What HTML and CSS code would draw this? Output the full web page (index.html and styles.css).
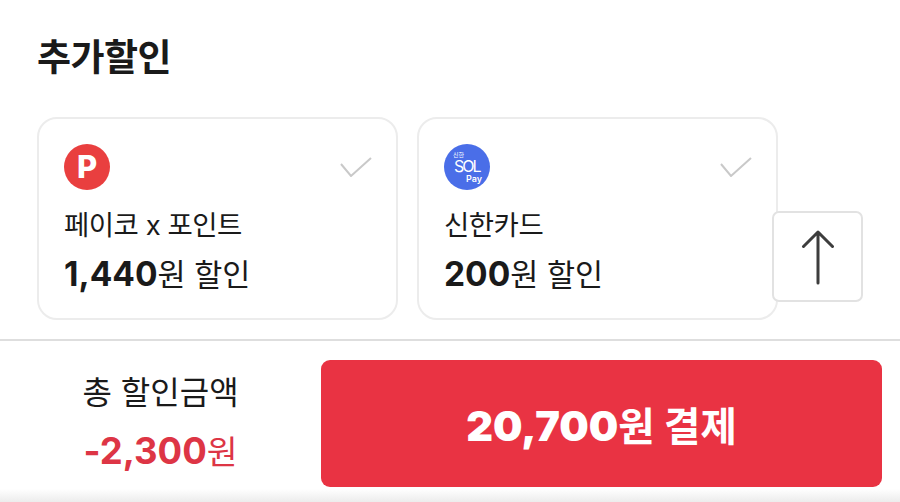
FILE: index.html
```html
<!DOCTYPE html>
<html lang="ko">
<head>
  <meta charset="UTF-8">
  <title>추가할인</title>
  <link rel="stylesheet" href="styles.css">
</head>
<body>
  <section class="discount">
    <h2 class="discount-title">추가할인</h2>
    <div class="card-list">
      <div class="card">
        <div class="card-top">
          <span class="logo logo-point">P</span>
          <svg class="check" width="32" height="20" viewBox="0 0 32 20"><path d="M1 7L11 19L31 1" /></svg>
        </div>
        <p class="card-name">페이코 x 포인트</p>
        <p class="card-amount"><strong>1,440</strong>원 할인</p>
      </div>
      <div class="card">
        <div class="card-top">
          <span class="logo logo-sol">
            <span class="sol-bank">신한</span>
            <span class="sol-name">SOL</span>
            <span class="sol-pay">Pay</span>
          </span>
          <svg class="check" width="32" height="20" viewBox="0 0 32 20"><path d="M1 7L11 19L31 1" /></svg>
        </div>
        <p class="card-name">신한카드</p>
        <p class="card-amount"><strong>200</strong>원 할인</p>
      </div>
    </div>
    <button class="top-btn">
      <svg width="34" height="56" viewBox="0 0 34 56"><path d="M17 54V3M2.500 17.500L17 3L31.500 17.500" /></svg>
    </button>
  </section>
  <footer class="pay-bar">
    <div class="pay-summary">
      <p class="pay-label">총 할인금액</p>
      <p class="pay-total"><strong>-2,300</strong>원</p>
    </div>
    <button class="pay-btn"><strong>20,700</strong>원 결제</button>
  </footer>
</body>
</html>
```

FILE: styles.css
```css
* {
  box-sizing: border-box;
}

body {
  margin: 0;
  height: 502px;
  overflow: hidden;
  background: #fff;
  color: #1a1a1a;
  font-family: "Inter", "Noto Sans CJK KR", sans-serif;
}

p {
  margin: 0;
}

.discount {
  position: relative;
  height: 339px;
  padding: 36px 37px 0;
}

.discount-title {
  margin: 0 0 38px;
  font-size: 37px;
  line-height: 43px;
  font-weight: 700;
  letter-spacing: -0.5px;
}

.card-list {
  display: flex;
  gap: 19px;
}

.card {
  width: 361px;
  height: 203px;
  padding: 25px 24px 0 25px;
  background: #fff;
  border: 2px solid #ececec;
  border-radius: 20px;
}

.card-top {
  display: flex;
  justify-content: space-between;
  align-items: flex-start;
  height: 46px;
}

.check {
  margin-top: 13px;
}

.check path {
  fill: none;
  stroke: #c9c9c9;
  stroke-width: 2;
}

.logo {
  position: relative;
  display: block;
  width: 46px;
  height: 46px;
  border-radius: 50%;
  color: #fff;
}

.logo-point {
  background: #e93f3f;
  font-size: 31px;
  line-height: 46px;
  font-weight: 800;
  text-align: center;
}

.logo-sol {
  background: #4a6ee8;
}

.logo-sol span {
  position: absolute;
}

.sol-bank {
  top: 8px;
  left: 9px;
  font-size: 6px;
  line-height: 6px;
}

.sol-name {
  top: 15px;
  left: 10px;
  font-size: 16px;
  line-height: 14px;
  letter-spacing: -2px;
}

.sol-pay {
  top: 30px;
  left: 22px;
  font-size: 9px;
  line-height: 10px;
  font-weight: 600;
}

.card-name {
  margin-top: 19px;
  font-size: 27.5px;
  line-height: 32px;
  letter-spacing: -0.5px;
}

.card-amount {
  margin-top: 14px;
  font-size: 30.5px;
  line-height: 38px;
}

.card-amount strong {
  font-size: 33.5px;
  font-weight: 700;
}

.top-btn {
  position: absolute;
  left: 772px;
  top: 211px;
  width: 91px;
  height: 91px;
  padding: 0;
  display: flex;
  align-items: center;
  justify-content: center;
  background: #fff;
  border: 2px solid #e2e2e2;
  border-radius: 7px;
}

.top-btn path {
  fill: none;
  stroke: #3d3d3d;
  stroke-width: 3;
  stroke-linecap: round;
  stroke-linejoin: round;
}

.pay-bar {
  display: flex;
  height: 163px;
  padding: 19px 18px 0 0;
  border-top: 2px solid #dedede;
  background: linear-gradient(#fff 148px, #ececec);
}

.pay-summary {
  width: 321px;
  padding-top: 13px;
  text-align: center;
}

.pay-label {
  font-size: 32px;
  line-height: 40px;
}

.pay-total {
  margin-top: 16px;
  font-size: 33.5px;
  line-height: 44px;
  color: #dd3545;
}

.pay-total strong {
  font-size: 36.5px;
  font-weight: 700;
}

.pay-btn {
  width: 561px;
  height: 127px;
  background: #e93343;
  border: none;
  border-radius: 9px;
  color: #fff;
  font-family: inherit;
  font-size: 39.5px;
  font-weight: 700;
}

.pay-btn strong {
  font-size: 41.5px;
}
```
